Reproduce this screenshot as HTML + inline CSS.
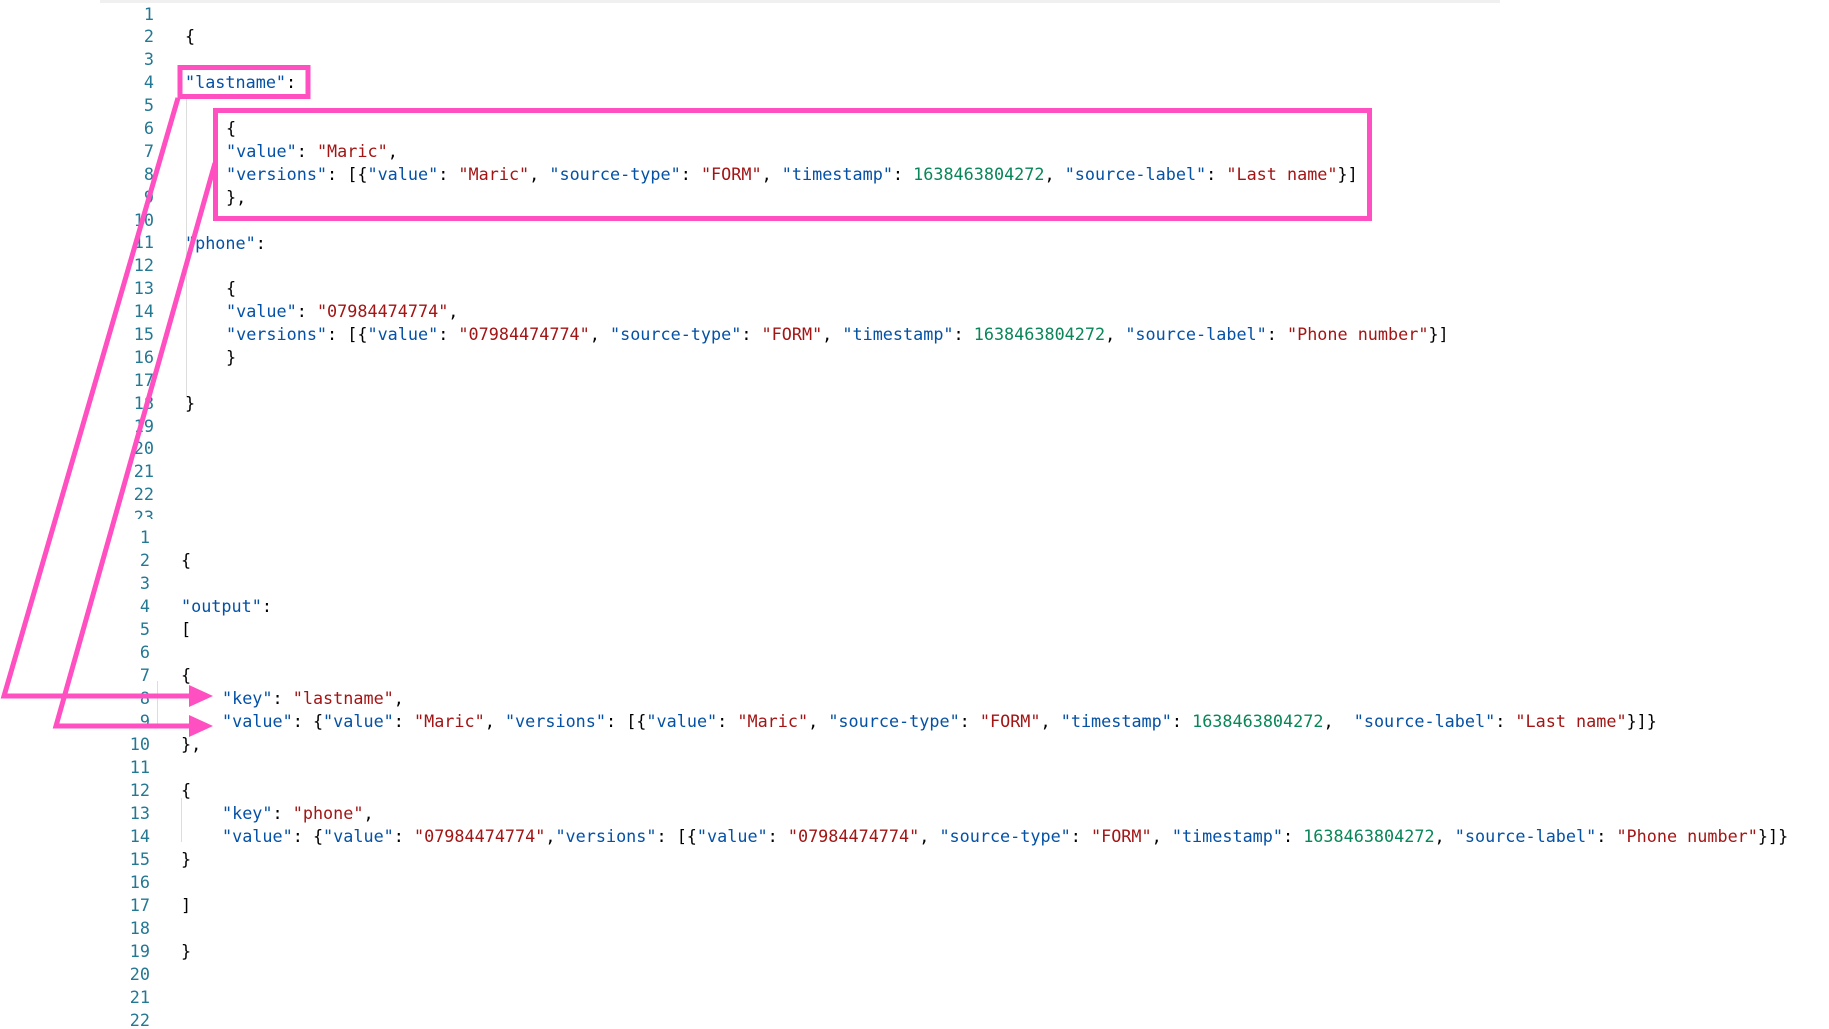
<!DOCTYPE html>
<html><head><meta charset="utf-8"><style>
html,body{margin:0;padding:0;background:#fff;width:1829px;height:1029px;overflow:hidden;position:relative}
.blk{position:absolute;font-family:"DejaVu Sans Mono","Liberation Mono",monospace;font-size:16.8px;white-space:pre;}
.ln{position:absolute;text-align:right;color:#237893;width:60px;white-space:normal}
.l{position:absolute;left:0;height:23px;line-height:23px}
.k{color:#0451a5}.s{color:#a31515}.n{color:#098658}.p{color:#000}
</style></head><body>
<div style="position:absolute;left:100px;top:0;width:1400px;height:3px;background:#f0f0f0"></div>
<div style="position:absolute;left:186px;top:97px;width:1px;height:300px;background:#ddd"></div>
<div style="position:absolute;left:157px;top:681px;width:1px;height:44px;background:#ddd"></div>
<div style="position:absolute;left:181px;top:798px;width:1px;height:44px;background:#ddd"></div>

<div class="blk" style="left:0;top:2.5px;width:1829px;height:516px;overflow:hidden"><div class="ln" style="left:94px;top:0"><div style="height:22.9px;line-height:23px">1</div><div style="height:22.9px;line-height:23px">2</div><div style="height:22.9px;line-height:23px">3</div><div style="height:22.9px;line-height:23px">4</div><div style="height:22.9px;line-height:23px">5</div><div style="height:22.9px;line-height:23px">6</div><div style="height:22.9px;line-height:23px">7</div><div style="height:22.9px;line-height:23px">8</div><div style="height:22.9px;line-height:23px">9</div><div style="height:22.9px;line-height:23px">10</div><div style="height:22.9px;line-height:23px">11</div><div style="height:22.9px;line-height:23px">12</div><div style="height:22.9px;line-height:23px">13</div><div style="height:22.9px;line-height:23px">14</div><div style="height:22.9px;line-height:23px">15</div><div style="height:22.9px;line-height:23px">16</div><div style="height:22.9px;line-height:23px">17</div><div style="height:22.9px;line-height:23px">18</div><div style="height:22.9px;line-height:23px">19</div><div style="height:22.9px;line-height:23px">20</div><div style="height:22.9px;line-height:23px">21</div><div style="height:22.9px;line-height:23px">22</div><div style="height:22.9px;line-height:23px">23</div></div>
<div class="l" style="left:185px;top:22.9px">{</div>
<div class="l k" style="left:185px;top:68.7px">"lastname"<span class="p">:</span></div>
<div class="l" style="left:226px;top:114.5px">{</div>
<div class="l" style="left:226px;top:137.4px"><span class="k">"value"</span>: <span class="s">"Maric"</span>,</div>
<div class="l" style="left:226px;top:160.3px"><span class="k">"versions"</span>: [{<span class="k">"value"</span>: <span class="s">"Maric"</span>, <span class="k">"source-type"</span>: <span class="s">"FORM"</span>, <span class="k">"timestamp"</span>: <span class="n">1638463804272</span>, <span class="k">"source-label"</span>: <span class="s">"Last name"</span>}]</div>
<div class="l" style="left:226px;top:183.2px">},</div>
<div class="l k" style="left:185px;top:229px">"phone"<span class="p">:</span></div>
<div class="l" style="left:226px;top:274.8px">{</div>
<div class="l" style="left:226px;top:297.7px"><span class="k">"value"</span>: <span class="s">"07984474774"</span>,</div>
<div class="l" style="left:226px;top:320.6px"><span class="k">"versions"</span>: [{<span class="k">"value"</span>: <span class="s">"07984474774"</span>, <span class="k">"source-type"</span>: <span class="s">"FORM"</span>, <span class="k">"timestamp"</span>: <span class="n">1638463804272</span>, <span class="k">"source-label"</span>: <span class="s">"Phone number"</span>}]</div>
<div class="l" style="left:226px;top:343.5px">}</div>
<div class="l" style="left:185px;top:389.3px">}</div>
</div>

<div class="blk" style="left:0;top:525.5px;width:1829px;height:504px;overflow:hidden"><div class="ln" style="left:90px;top:0"><div style="height:23.05px;line-height:23px">1</div><div style="height:23.05px;line-height:23px">2</div><div style="height:23.05px;line-height:23px">3</div><div style="height:23.05px;line-height:23px">4</div><div style="height:23.05px;line-height:23px">5</div><div style="height:23.05px;line-height:23px">6</div><div style="height:23.05px;line-height:23px">7</div><div style="height:23.05px;line-height:23px">8</div><div style="height:23.05px;line-height:23px">9</div><div style="height:23.05px;line-height:23px">10</div><div style="height:23.05px;line-height:23px">11</div><div style="height:23.05px;line-height:23px">12</div><div style="height:23.05px;line-height:23px">13</div><div style="height:23.05px;line-height:23px">14</div><div style="height:23.05px;line-height:23px">15</div><div style="height:23.05px;line-height:23px">16</div><div style="height:23.05px;line-height:23px">17</div><div style="height:23.05px;line-height:23px">18</div><div style="height:23.05px;line-height:23px">19</div><div style="height:23.05px;line-height:23px">20</div><div style="height:23.05px;line-height:23px">21</div><div style="height:23.05px;line-height:23px">22</div></div>
<div class="l" style="left:181px;top:23.05px">{</div>
<div class="l k" style="left:181px;top:69.15px">"output"<span class="p">:</span></div>
<div class="l" style="left:181px;top:92.2px">[</div>
<div class="l" style="left:181px;top:138.3px">{</div>
<div class="l" style="left:222px;top:161.35px"><span class="k">"key"</span>: <span class="s">"lastname"</span>,</div>
<div class="l" style="left:222px;top:184.4px"><span class="k">"value"</span>: {<span class="k">"value"</span>: <span class="s">"Maric"</span>, <span class="k">"versions"</span>: [{<span class="k">"value"</span>: <span class="s">"Maric"</span>, <span class="k">"source-type"</span>: <span class="s">"FORM"</span>, <span class="k">"timestamp"</span>: <span class="n">1638463804272</span>,  <span class="k">"source-label"</span>: <span class="s">"Last name"</span>}]}</div>
<div class="l" style="left:181px;top:207.45px">},</div>
<div class="l" style="left:181px;top:253.55px">{</div>
<div class="l" style="left:222px;top:276.6px"><span class="k">"key"</span>: <span class="s">"phone"</span>,</div>
<div class="l" style="left:222px;top:299.65px"><span class="k">"value"</span>: {<span class="k">"value"</span>: <span class="s">"07984474774"</span>,<span class="k">"versions"</span>: [{<span class="k">"value"</span>: <span class="s">"07984474774"</span>, <span class="k">"source-type"</span>: <span class="s">"FORM"</span>, <span class="k">"timestamp"</span>: <span class="n">1638463804272</span>, <span class="k">"source-label"</span>: <span class="s">"Phone number"</span>}]}</div>
<div class="l" style="left:181px;top:322.7px">}</div>
<div class="l" style="left:181px;top:368.8px">]</div>
<div class="l" style="left:181px;top:414.9px">}</div>
</div>

<svg width="1829" height="1029" style="position:absolute;left:0;top:0" fill="none" stroke="#ff4fc0" stroke-width="5">
<rect x="180" y="67.5" width="128" height="29"/>
<rect x="215.5" y="110.5" width="1154" height="108"/>
<polyline points="178,98 4,696 190,696"/>
<polyline points="215,163 56,726 190,726"/>
<polygon points="189,685 213,696 189,707" fill="#ff4fc0" stroke="none"/>
<polygon points="189,715 213,726 189,737" fill="#ff4fc0" stroke="none"/>
</svg>
</body></html>
